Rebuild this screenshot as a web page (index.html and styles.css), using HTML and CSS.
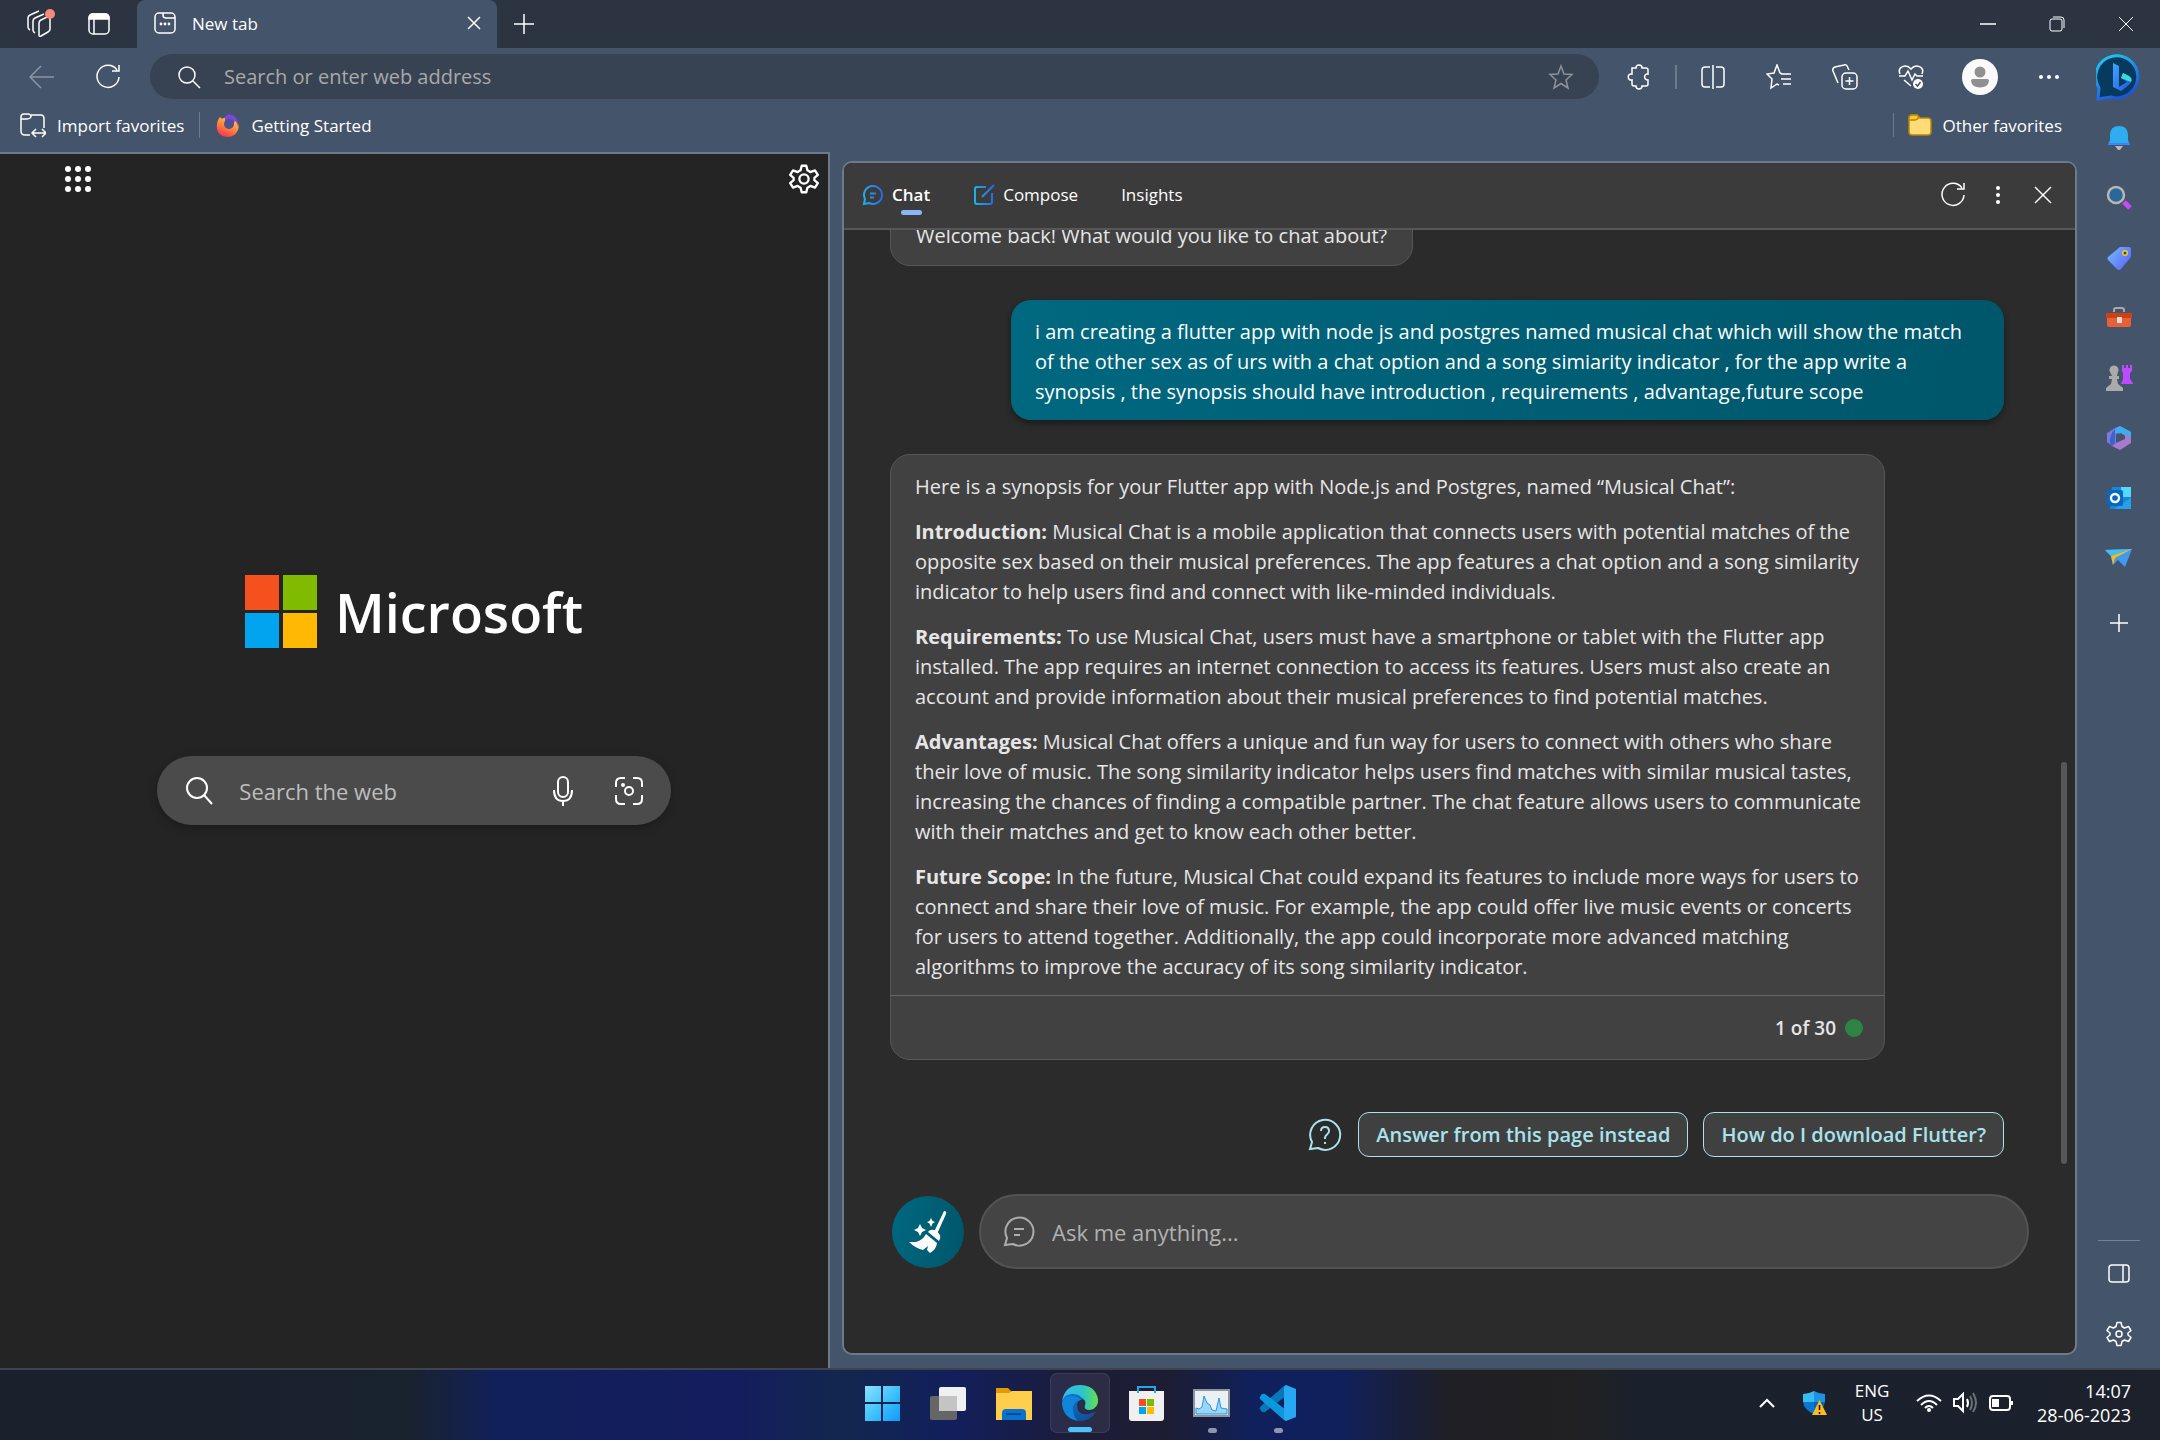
FILE: index.html
```html
<!DOCTYPE html>
<html lang="en">
<head>
<meta charset="utf-8">
<title>New tab</title>
<link rel="stylesheet" href="styles.css">
</head>
<body>
<div class="window">
  <header class="titlebar">
    <button class="title-btn workspaces" aria-label="Workspaces"><svg class="line" width="28" height="30" viewBox="0 0 28 30"><path d="M12 26V14Q12 12 14 11L20 8Q23 7 23 10V20Q23 22 21 23L14 27Q12 28 12 26Z"/><path d="M8 24Q6 23 6 21V12Q6 10 8 9L17 5"/><path d="M3 21Q1 20 1 18V9Q1 7 3 6L12 2"/><circle cx="23" cy="5" r="5" fill="#f28b7d" stroke="none"/></svg></button>
    <button class="title-btn" aria-label="Tab actions"><svg class="line" width="24" height="24" viewBox="0 0 24 24"><rect x="2" y="2" width="20" height="20" rx="4"/><path d="M2 7V6Q2 2 6 2H18Q22 2 22 6V7Z" fill="#fff"/><path d="M7 7V22"/></svg></button>
    <div class="tab">
      <svg class="line" width="24" height="24" viewBox="0 0 24 24"><rect x="2" y="2" width="20" height="20" rx="4"/><path d="M10 2V4Q10 7 13 7H22"/><g fill="#fff" stroke="none"><circle cx="8" cy="13" r="1.4"/><circle cx="12" cy="13" r="1.4"/><circle cx="16" cy="13" r="1.4"/></g></svg>
      <span class="tab-name">New tab</span>
      <button class="tab-close" aria-label="Close tab"><svg class="line" width="14" height="14" viewBox="0 0 14 14"><path d="M1 1L13 13M13 1L1 13"/></svg></button>
    </div>
    <button class="title-btn" aria-label="New tab"><svg class="line" width="22" height="22" viewBox="0 0 22 22"><path d="M11 1V21M1 11H21"/></svg></button>
    <div class="window-controls">
      <button aria-label="Minimize"><svg class="line" width="16" height="16" viewBox="0 0 16 16"><path d="M0 8H16"/></svg></button>
      <button aria-label="Restore"><svg class="line thin" width="16" height="16" viewBox="0 0 16 16"><rect x="1" y="3" width="12" height="12" rx="2"/><path d="M4 1H12Q15 1 15 4V12"/></svg></button>
      <button aria-label="Close"><svg class="line thin" width="16" height="16" viewBox="0 0 16 16"><path d="M1 1L15 15M15 1L1 15"/></svg></button>
    </div>
  </header>

  <div class="frame">
    <div class="main">
      <div class="toolbar">
        <button class="tool" aria-label="Back"><svg class="line dim" width="26" height="24" viewBox="0 0 26 24"><path d="M25 12H1M12 1L1 12L12 23"/></svg></button>
        <button class="tool" aria-label="Refresh"><svg class="line" width="26" height="26" viewBox="0 0 26 26"><path d="M22 6A11 11 0 1 0 24 13M24 1V7H17"/></svg></button>
        <label class="address">
          <svg class="line" width="24" height="24" viewBox="0 0 24 24"><circle cx="10" cy="10" r="8"/><path d="M16 16L23 23"/></svg>
          <input type="text" placeholder="Search or enter web address" aria-label="Address">
          <svg class="line gray" width="26" height="26" viewBox="0 0 26 26"><path d="M13 2L16 10L24 10.500L18 16L20 24L13 19.500L6 24L8 16L2 10.500L10 10Z"/></svg>
        </label>
        <div class="tools">
          <button class="tool" aria-label="Extensions"><svg class="line" width="26" height="26" viewBox="0 0 26 26"><path d="M6 4H10C10 0 16 0 16 4H20Q22 4 22 6V10C18 9 17 16 22 16V20Q22 22 20 22H16C16 26 10 26 10 22H8Q6 22 6 20V16C1 17 1 9 6 10Z"/></svg></button>
          <span class="tool-sep"></span>
          <button class="tool" aria-label="Split screen"><svg class="line" width="26" height="26" viewBox="0 0 26 26"><path d="M10 3H5Q2 3 2 6V20Q2 23 5 23H10M16 3H21Q24 3 24 6V20Q24 23 21 23H16M13 1V25"/></svg></button>
          <button class="tool" aria-label="Favorites"><svg class="line" width="26" height="26" viewBox="0 0 26 26"><path d="M16 10L14 9L11 1L8 9L1 10L6 15L5 24L11 20L13 21M15 10H25M15 15H25M17 20H25"/></svg></button>
          <button class="tool" aria-label="Collections"><svg class="line" width="26" height="26" viewBox="0 0 26 26"><rect x="10" y="9" width="15" height="16" rx="4"/><path d="M17.500 13V21M13.500 17H21.500M6 19L1 7Q0 4 3 3L12 1Q15 0 16 4L17 6"/></svg></button>
          <button class="tool" aria-label="Browser essentials"><svg class="line" width="26" height="26" viewBox="0 0 26 26"><path d="M2 10C-1 3 8-1 13 5C18-1 27 3 24 10M1 12H7L10 7L14 16L17 10L19 12H25M6 16L13 22"/><circle cx="20" cy="20" r="5" fill="#fff" stroke="none"/><path d="M17.500 20L19.500 22L22.500 18" stroke="#44546a" style="stroke:#44546a"/></svg></button>
          <button class="tool profile" aria-label="Profile"><svg width="36" height="36" viewBox="0 0 36 36"><circle cx="18" cy="18" r="18" fill="#fafafa"/><circle cx="18" cy="13" r="5.500" fill="#909090"/><path d="M9 22Q9 20 11 20H25Q27 20 27 22Q26 28.500 18 28.500Q10 28.500 9 22Z" fill="#909090"/></svg></button>
          <button class="tool" aria-label="More"><svg width="22" height="6" viewBox="0 0 22 6" fill="#fff"><circle cx="3" cy="3" r="2"/><circle cx="11" cy="3" r="2"/><circle cx="19" cy="3" r="2"/></svg></button>
        </div>
      </div>

      <nav class="favorites">
        <a class="fav" href="#import"><svg class="line" width="26" height="26" viewBox="0 0 26 26"><path d="M10 23H5Q1 23 1 19V5Q1 2 4 2H8Q11 2 11 5Q10 7 7 7H1M11 3H21Q24 3 24 7V16M13 21H25M16 17L12 21L16 25M22 17L26 21L22 25"/></svg>Import favorites</a>
        <a class="fav fav-split" href="#start"><svg width="24" height="26" viewBox="0 0 24 26"><defs><linearGradient id="fx" x1=".8" y1="0" x2=".3" y2="1"><stop offset="0" stop-color="#ffd84a"/><stop offset=".5" stop-color="#ff8a3c"/><stop offset="1" stop-color="#f8314f"/></linearGradient></defs><path d="M4 5L6 7Q8 5 12 6L20 8Q24 13 22 18Q19 25 12 25Q3 25 1 17Q0 10 4 5Z" fill="url(#fx)"/><path d="M9 5Q12 0 18 4Q23 8 22 15Q21 10 19 9L14 17Q8 16 9 5Z" fill="#7b46dd"/><circle cx="13" cy="12" r="5" fill="#52518b"/></svg>Getting Started</a>
        <a class="fav fav-split fav-other" href="#other"><svg width="24" height="24" viewBox="0 0 24 24" stroke="#b58509" stroke-width="1.500"><path d="M1 5Q1 2 4 2H9L12 5H20Q23 5 23 8V19Q23 22 20 22H4Q1 22 1 19Z" fill="#ffdc78"/><path d="M1 5Q1 2 4 2H9L11 4Q9 7 7 7H1Z" fill="#fcc935"/></svg>Other favorites</a>
      </nav>

      <div class="panes">
        <main class="page">
          <div class="page-top">
            <button aria-label="App launcher"><svg width="28" height="28" viewBox="0 0 28 28" fill="#fff"><circle cx="4" cy="4" r="3"/><circle cx="14" cy="4" r="3"/><circle cx="24" cy="4" r="3"/><circle cx="4" cy="14" r="3"/><circle cx="14" cy="14" r="3"/><circle cx="24" cy="14" r="3"/><circle cx="4" cy="24" r="3"/><circle cx="14" cy="24" r="3"/><circle cx="24" cy="24" r="3"/></svg></button>
            <button aria-label="Page settings"><svg class="line bold" width="30" height="30" viewBox="0 0 26 26"><path d="M11 1.500H15L16 5.500L18.500 7L22.500 5.500L25 9.500L22 12V14L25 16.500L22.500 20.500L18.500 19L16 20.500L15 24.500H11L10 20.500L7.500 19L3.500 20.500L1 16.500L4 14V12L1 9.500L3.500 5.500L7.500 7L10 5.500Z" stroke-linejoin="round"/><circle cx="13" cy="13" r="4"/></svg></button>
          </div>
          <div class="hero">
            <div class="ms-logo"><svg width="72" height="73" viewBox="0 0 72 73"><path fill="#f4511e" d="M0 0H34V35H0Z"/><path fill="#80ba01" d="M38 0H72V35H38Z"/><path fill="#02a4ef" d="M0 38H34V73H0Z"/><path fill="#ffb902" d="M38 38H72V73H38Z"/></svg><span>Microsoft</span></div>
            <form class="web-search">
              <svg class="line bold" width="28" height="28" viewBox="0 0 28 28"><circle cx="12" cy="11" r="10"/><path d="M19 18L27 27"/></svg>
              <input type="text" placeholder="Search the web" aria-label="Search the web">
              <button type="button" aria-label="Voice search"><svg class="line bold" width="22" height="32" viewBox="0 0 22 32"><rect x="6" y="2" width="10" height="20" rx="5"/><path d="M2 15Q2 26 11 26Q20 26 20 15M11 26V31"/></svg></button>
              <button type="button" aria-label="Visual search"><svg class="line bold" width="28" height="28" viewBox="0 0 28 28"><path d="M10 1H6Q1 1 1 6V10M18 1H22Q27 1 27 6V10M1 18V22Q1 27 6 27H10M18 27H22Q27 27 27 22V18"/><circle cx="14" cy="14" r="4"/><circle cx="8" cy="8" r="1" fill="#fff"/></svg></button>
            </form>
          </div>
        </main>

        <section class="chat">
          <header class="chat-head">
            <button class="chat-tab active"><svg class="line" width="22" height="22" viewBox="0 0 22 22"><defs><linearGradient id="bl" gradientUnits="userSpaceOnUse" x1="0" y1="0" x2="22" y2="0"><stop offset="0" stop-color="#1fb5ea"/><stop offset="1" stop-color="#2a62e8"/></linearGradient></defs><g style="stroke:url(#bl);stroke-width:2"><path d="M2 20L3 15A9 9 0 1 1 7 19Z"/><path d="M8 9.500H14M8 13.500H12"/></g></svg><span>Chat</span></button>
            <button class="chat-tab"><svg class="line" width="22" height="22" viewBox="0 0 22 22"><g style="stroke:url(#bl);stroke-width:2"><path d="M13 3H4Q2 3 2 5V18Q2 20 4 20H17Q19 20 19 18V9M9 13L21 1"/></g></svg><span>Compose</span></button>
            <button class="chat-tab"><span>Insights</span></button>
            <div class="chat-actions">
              <button aria-label="Reload"><svg class="line" width="26" height="26" viewBox="0 0 26 26"><path d="M22 6A11 11 0 1 0 24 13M24 1V7H17"/></svg></button>
              <button aria-label="More options"><svg width="6" height="18" viewBox="0 0 6 18" fill="#fff"><circle cx="3" cy="2" r="2"/><circle cx="3" cy="9" r="2"/><circle cx="3" cy="16" r="2"/></svg></button>
              <button aria-label="Close chat"><svg class="line" width="18" height="18" viewBox="0 0 18 18"><path d="M1 1L17 17M17 1L1 17"/></svg></button>
            </div>
          </header>
          <div class="messages">
            <div class="bubble bot greeting">Welcome back! What would you like to chat about?</div>
            <div class="bubble user">i am creating a flutter app with node js and postgres named musical chat which will show the match<br>of the other sex as of urs with a chat option and a song simiarity indicator , for the app write a<br>synopsis , the synopsis should have introduction , requirements , advantage,future scope</div>
            <article class="bubble bot answer">
              <div class="answer-text">
                <p>Here is a synopsis for your Flutter app with Node.js and Postgres, named “Musical Chat”:</p>
                <p><strong>Introduction:</strong> Musical Chat is a mobile application that connects users with potential matches of the<br>opposite sex based on their musical preferences. The app features a chat option and a song similarity<br>indicator to help users find and connect with like-minded individuals.</p>
                <p><strong>Requirements:</strong> To use Musical Chat, users must have a smartphone or tablet with the Flutter app<br>installed. The app requires an internet connection to access its features. Users must also create an<br>account and provide information about their musical preferences to find potential matches.</p>
                <p><strong>Advantages:</strong> Musical Chat offers a unique and fun way for users to connect with others who share<br>their love of music. The song similarity indicator helps users find matches with similar musical tastes,<br>increasing the chances of finding a compatible partner. The chat feature allows users to communicate<br>with their matches and get to know each other better.</p>
                <p><strong>Future Scope:</strong> In the future, Musical Chat could expand its features to include more ways for users to<br>connect and share their love of music. For example, the app could offer live music events or concerts<br>for users to attend together. Additionally, the app could incorporate more advanced matching<br>algorithms to improve the accuracy of its song similarity indicator.</p>
              </div>
              <footer class="answer-foot">1 of 30<span class="dot"></span></footer>
            </article>
            <div class="suggestions">
              <svg class="line aqua" width="36" height="36" viewBox="0 0 36 36"><path d="M3 32L5 25A15 15 0 1 1 11 31Z"/><path d="M14 14Q14 10 18 10Q22 10 22 14Q22 16 20 17.500Q18 19 18 21V22M18 25V27"/></svg>
              <button>Answer from this page instead</button>
              <button>How do I download Flutter?</button>
            </div>
            <span class="thumb"></span>
          </div>
          <form class="composer">
            <button type="button" class="broom" aria-label="New topic"><svg width="40" height="44" viewBox="0 0 40 44" fill="#fff"><path d="M36 1Q39 1 38 4L29 24L26 22Z"/><path d="M23 20Q28 19 32 25Q33 28 31 31L20 22Q21 20 23 20Z"/><path d="M18 24L29 33Q28 40 22 43L19 40L20 36L15 40Q7 38 1 32L8 32Q15 30 18 24Z"/><path d="M12 14L14 18L18 20L14 22L12 26L10 22L6 20L10 18Z"/><path d="M23 8L24.500 11L27 12L24.500 13.500L23 17L21.500 13.500L19 12L21.500 11Z"/></svg></button>
            <label class="ask"><svg class="line gray2" width="32" height="32" viewBox="0 0 32 32"><path d="M2 29L4 22A14 14 0 1 1 10 28Z"/><path d="M11 13H21M11 19H17"/></svg><input type="text" placeholder="Ask me anything..." aria-label="Ask me anything"></label>
          </form>
        </section>
      </div>
    </div>

    <aside class="sidebar">
      <button aria-label="Bing chat"><svg width="46" height="48" viewBox="-1 0 46 48"><defs><linearGradient id="bg1" x1="0" y1="0" x2=".5" y2="1"><stop offset="0" stop-color="#1ed3f4"/><stop offset="1" stop-color="#1c55e0"/></linearGradient><linearGradient id="bg2" x1="0" y1="0" x2="1" y2="1"><stop offset="0" stop-color="#3ba8fb"/><stop offset="1" stop-color="#2355e8"/></linearGradient></defs><path d="M1 45L2 34A21 21 0 1 1 14 43Q7 44 1 45Z" fill="#073a5c" stroke="url(#bg1)" stroke-width="3"/><path d="M16 9L22 12V33L30 28L24 24L26 19L32 22Q36 26 32 31L24 37L16 33Z" fill="url(#bg2)"/><path d="M26 19L32 22Q36 25 34 28L24 24Z" fill="#36dfd3"/></svg></button>
      <button aria-label="Notifications"><svg width="24" height="26" viewBox="0 0 24 26"><path d="M12 1Q3 1 3 10V15L1 20H23L21 15V10Q21 1 12 1Z" fill="#2eaef0"/><path d="M2 18L1 20H23L22 18Z" fill="#3c83ff"/><path d="M8 21H16L13 25H11Z" fill="#b8b8b8"/></svg></button>
      <button aria-label="Search"><svg width="26" height="26" viewBox="0 0 26 26"><path d="M18 17L24 23" stroke="#c84af7" stroke-width="5"/><circle cx="10" cy="10" r="8" fill="#28699a" stroke="#b9b5b2" stroke-width="2.500"/></svg></button>
      <button aria-label="Shopping"><svg width="26" height="26" viewBox="0 0 26 26"><defs><linearGradient id="tg" x1="0" y1=".3" x2="1" y2="1"><stop offset="0" stop-color="#72b1ff"/><stop offset="1" stop-color="#5a5cff"/></linearGradient></defs><path d="M14 2H23Q25 2 25 4V12L15 24Q13 26 11 24L2 15Q1 13 2 12Z" fill="url(#tg)"/><circle cx="19" cy="8" r="2.300" fill="#374b83" stroke="#f7cf16" stroke-width="1.500"/></svg></button>
      <button aria-label="Tools"><svg width="28" height="24" viewBox="0 0 28 24"><path d="M9 6V4Q9 2 11 2H17Q19 2 19 4V6" fill="none" stroke="#aaa" stroke-width="2"/><path d="M2 10H26V19Q26 21 24 21H4Q2 21 2 19Z" fill="#e86038"/><path d="M1 7H27V12H1Z" fill="#d14010"/><rect x="12" y="11" width="5" height="6" fill="#ddd"/></svg></button>
      <button aria-label="Games"><svg width="28" height="28" viewBox="0 0 28 28"><path d="M17 1H19V4H21V1H23V4H25V1H27V7L25 9V15L28 19V20H16L18 15V9L17 7Z" fill="#bd4bff"/><path d="M5 8A4.500 4.500 0 1 1 13 8L12 12H14V15H12L13 20L18 24V27H1V24L6 20L7 15H4V12H7Z" fill="#aaa"/></svg></button>
      <button aria-label="Microsoft 365"><svg width="26" height="26" viewBox="0 0 26 26"><path d="M9 3L14 1L25 7V15L16 8L10 9V18L6 21L1 17V8Z" fill="#7b78df"/><path d="M14 1L25 7V15L15 8L9 8V4Z" fill="#39aef0"/><path d="M10 18L19 14V9L25 12V18L14 25L6 21Z" fill="#a77ad0"/><path d="M9 4V8V18L6 21L4 19Q3 10 9 4Z" fill="#3b65c9"/></svg></button>
      <button aria-label="Outlook"><svg width="26" height="24" viewBox="0 0 26 24"><path d="M6 1H25V23H4V12Z" fill="#1688d5"/><path d="M15 1H25V11H15Z" fill="#55d8fb"/><path d="M25 12V23H8Z" fill="#2a9fe9"/><rect x="1" y="4" width="16" height="16" rx="2" fill="#0568c1"/><circle cx="9" cy="12" r="4" fill="none" stroke="#fff" stroke-width="2.400"/></svg></button>
      <button aria-label="Drop"><svg width="28" height="20" viewBox="0 0 28 20"><path d="M0 2L27 1L20 19L13 12L8 17L6 8Z" fill="#4298ef"/><path d="M0 2L27 1L6 8Z" fill="#43bdf5"/><path d="M27 1L6 8L8 17L10 10Z" fill="#f6bd16"/></svg></button>
      <button class="add" aria-label="Customize"><svg class="line" width="18" height="18" viewBox="0 0 18 18"><path d="M9 0V18M0 9H18"/></svg></button>
      <hr>
      <button aria-label="Hide sidebar"><svg class="line" width="22" height="20" viewBox="0 0 22 20"><rect x="1" y="1" width="20" height="17" rx="3"/><path d="M15 1V18"/></svg></button>
      <button aria-label="Settings"><svg class="line" width="26" height="26" viewBox="0 0 26 26"><path d="M11 1.500H15L16 5.500L18.500 7L22.500 5.500L25 9.500L22 12V14L25 16.500L22.500 20.500L18.500 19L16 20.500L15 24.500H11L10 20.500L7.500 19L3.500 20.500L1 16.500L4 14V12L1 9.500L3.500 5.500L7.500 7L10 5.500Z" stroke-linejoin="round"/><circle cx="13" cy="13" r="3"/></svg></button>
    </aside>
  </div>
</div>

<footer class="taskbar">
  <nav class="apps">
    <button aria-label="Start"><svg width="36" height="36" viewBox="0 0 36 36"><defs><linearGradient id="win" x1="0" y1="0" x2="1" y2="1"><stop offset="0" stop-color="#8be2fb"/><stop offset=".5" stop-color="#41c3fb"/><stop offset="1" stop-color="#0f98fb"/></linearGradient></defs><path fill="url(#win)" d="M1 1H17V17H1ZM19 1H36V17H19ZM1 19H17V36H1ZM19 19H36V36H19Z"/></svg></button>
    <button aria-label="Task view"><svg width="38" height="36" viewBox="0 0 38 36"><rect x="1" y="11" width="27" height="24" rx="2" fill="#666"/><rect x="10" y="2" width="27" height="24" rx="2" fill="#f0f0f0"/><rect x="10" y="11" width="18" height="15" fill="#c4c4c4"/></svg></button>
    <button aria-label="File Explorer"><svg width="38" height="36" viewBox="0 0 38 36"><path d="M1 3H13L17 7V12H1Z" fill="#e29a05"/><path d="M1 8H14L17 6H37V35H1Z" fill="#ffcf4b"/><path d="M7 35V28Q7 24 11 24H27Q31 24 31 28V35Z" fill="#0872ce"/><path d="M11 29H26" stroke="#044b94" stroke-width="2"/></svg></button>
    <button class="current" aria-label="Microsoft Edge"><svg width="38" height="38" viewBox="0 0 38 38"><defs><linearGradient id="e1"><stop offset="0" stop-color="#35b7f1"/><stop offset=".6" stop-color="#2cc6c5"/><stop offset="1" stop-color="#6ae04a"/></linearGradient><linearGradient id="e2" x1="0" y1="0" x2=".7" y2="1"><stop offset="0" stop-color="#0c78d3"/><stop offset="1" stop-color="#10509c"/></linearGradient></defs><path d="M1 17Q4 1 19 1Q34 1 37 15Q38 24 29 26Q22 26 24 21Q26 16 19 13Q8 9 1 17Z" fill="url(#e1)"/><path d="M1 19Q2 11 10 10Q19 9 22 16Q17 15 16 21Q16 32 28 30Q33 28 35 28Q29 37 19 37Q3 36 1 19Z" fill="url(#e2)"/><path d="M1 19Q4 11 12 12Q19 13 20 16Q11 17 12 27Q13 34 17 37Q2 34 1 19Z" fill="#0f86dc"/></svg><i></i></button>
    <button aria-label="Microsoft Store"><svg width="36" height="38" viewBox="0 0 36 38"><path d="M1 7H36V34Q36 37 33 37H4Q1 37 1 34Z" fill="#f0f0f0"/><path d="M10 9V3H27V9" fill="none" stroke="#1fa8ea" stroke-width="2"/><path d="M11 15H18V22H11Z" fill="#f25022"/><path d="M19 15H26V22H19Z" fill="#7fba00"/><path d="M11 23H18V30H11Z" fill="#00a4ef"/><path d="M19 23H26V30H19Z" fill="#ffb900"/></svg></button>
    <button aria-label="Task Manager"><svg width="38" height="30" viewBox="0 0 38 30"><rect x="1" y="2" width="35" height="26" fill="#eaf0f4" stroke="#8b969e" stroke-width="2"/><path d="M3 20L6 21L9 19L11 8L14 15L17 17L19 22L23 23L26 10L28 20L34 21V26H3Z" fill="#99d5f8" stroke="#2997dd"/></svg><i></i></button>
    <button aria-label="Visual Studio Code"><svg width="38" height="38" viewBox="0 0 38 38"><path d="M27 1V12L6 28Q4 29 2 27L1 25Q0 24 2 22L25 2Z" fill="#0877b9"/><path d="M27 37V26L6 10Q4 9 2 11L1 13Q0 14 2 16L25 36Z" fill="#0c98dd"/><path d="M27 1L37 5V33L27 37L25 35V3Z" fill="#27a8f2"/></svg><i></i></button>
  </nav>
  <div class="tray">
    <button class="wide" aria-label="Hidden icons"><svg class="line bold" width="18" height="12" viewBox="0 0 18 12"><path d="M2 10L9 3L16 10"/></svg></button>
    <button class="wide" aria-label="Windows Security"><svg width="26" height="26" viewBox="0 0 26 26"><path d="M12 1Q17 4 23 4V12H12Z" fill="#1d93e2"/><path d="M12 1Q7 4 1 4V12H12Z" fill="#37bdf3"/><path d="M1 12H12V24Q2 20 1 12Z" fill="#0877d2"/><path d="M12 12H23Q22 20 12 24Z" fill="#0565b7"/><path d="M17.500 10L25 25H10Z" fill="#fdbd1c"/><path d="M17.500 15V20M17.500 22V24" stroke="#111" stroke-width="1.500"/></svg></button>
    <button class="lang">ENG<br>US</button>
    <button aria-label="Wi-Fi"><svg class="line bold" width="26" height="20" viewBox="0 0 26 20"><path d="M1 8Q13-3 25 8M5 12Q13 4 21 12M9 15Q13 11 17 15"/><circle cx="13" cy="17" r="2" fill="#fff" stroke="none"/></svg></button>
    <button aria-label="Volume"><svg class="line bold" width="26" height="22" viewBox="0 0 26 22"><path d="M2 7H6L11 2V19L6 14H2Z"/><path d="M15 7Q17 11 15 15"/><path d="M18 4Q22 11 18 18M21 1Q27 11 21 20" opacity=".35"/></svg></button>
    <button aria-label="Battery"><svg class="line bold" width="26" height="18" viewBox="0 0 26 18"><rect x="2" y="2" width="20" height="14" rx="3"/><path d="M4 5H11V13H4Z" fill="#fff" stroke="none"/><path d="M24 7V11"/></svg></button>
    <button class="clock"><time>14:07<br>28-06-2023</time></button>
  </div>
</footer>
</body>
</html>
```
FILE: styles.css
```css
* { box-sizing: border-box; }

body {
  margin: 0;
  height: 100vh;
  display: flex;
  flex-direction: column;
  background: #44546a;
  color: #fff;
  font-family: "Open Sans", "Noto Sans", sans-serif;
  font-size: 17px;
  overflow: hidden;
}

button {
  padding: 0;
  border: 0;
  background: none;
  color: inherit;
  font: inherit;
  display: flex;
  align-items: center;
  justify-content: center;
}

input {
  flex: 1;
  min-width: 0;
  padding: 0;
  border: 0;
  outline: 0;
  background: none;
  color: #fff;
  font: inherit;
}

svg { display: block; flex: none; }
a { color: inherit; text-decoration: none; }

.line { fill: none; stroke: #fff; stroke-width: 1.5; }
.line.thin { stroke-width: 1; }
.line.bold { stroke-width: 2; }
.line.dim { stroke: #8b95a3; }
.line.gray { stroke: #8f9296; }
.line.gray2 { stroke: #adadad; stroke-width: 2; }
.line.aqua { stroke: #a9e3ec; stroke-width: 2; }

.window { flex: 1; min-height: 0; display: flex; flex-direction: column; }

/* title bar */
.titlebar {
  height: 48px;
  display: flex;
  background: #2b3440;
}
.title-btn { width: 54px; }
.workspaces { width: 62px; margin-left: 10px; }
.titlebar .tab {
  width: 360px;
  margin-left: 11px;
  padding: 0 16px 2px;
  display: flex;
  align-items: center;
  gap: 15px;
  background: #44546a;
  border-radius: 8px 8px 0 0;
}
.tab-name { flex: 1; }
.window-controls { margin-left: auto; display: flex; }
.window-controls button { width: 69px; }

/* window body */
.frame { flex: 1; min-height: 0; display: flex; }
.main { flex: 1; min-width: 0; display: flex; flex-direction: column; }

.toolbar {
  height: 57px;
  padding: 0 0 0 9px;
  display: flex;
  align-items: center;
}
.tool { width: 66px; height: 45px; }
.tool.profile { width: 72px; }
.address {
  flex: 1;
  height: 45px;
  margin: 0 7px 0 9px;
  padding: 0 25px 0 27px;
  display: flex;
  align-items: center;
  gap: 23px;
  border-radius: 23px;
  background: #374353;
  font-size: 20px;
}
.address input::placeholder { color: #a9a9a9; opacity: 1; }
.tools { display: flex; align-items: center; }
.tool-sep { width: 2px; height: 24px; margin: 0 3px; background: #6c7a8c; }

.favorites {
  height: 47px;
  padding: 0 20px 7px;
  display: flex;
  align-items: center;
}
.fav { display: flex; align-items: center; gap: 11px; }
.fav-split {
  margin-left: 15px;
  padding-left: 16px;
  border-left: 1px solid #6c7a8c;
}
.fav-split.fav-other { margin-left: auto; padding-left: 14px; }

.panes {
  flex: 1;
  min-height: 0;
  padding-right: 5px;
  display: grid;
  grid-template-columns: 830fr 1235fr;
  grid-template-rows: 100%;
  gap: 12px;
}

/* new tab page */
.page {
  border-top: 2px solid #6c7a8c;
  border-right: 2px solid #6c7a8c;
  background: #242424;
}
.page-top {
  height: 50px;
  padding: 0 9px 0 64px;
  display: flex;
  justify-content: space-between;
}
.hero {
  margin-top: 371px;
  display: flex;
  flex-direction: column;
  align-items: center;
}
.ms-logo {
  height: 73px;
  display: flex;
  align-items: center;
  gap: 18px;
  font-size: 54px;
  font-weight: 600;
  line-height: 72px;
}
.web-search {
  width: 62%;
  height: 69px;
  margin-top: 108px;
  padding: 0 28px;
  display: flex;
  align-items: center;
  gap: 26px;
  border-radius: 35px;
  background: #4b4b4b;
  box-shadow: 0 3px 8px #0004;
  font-size: 22px;
}
.web-search input::placeholder { color: #bdbdbd; opacity: 1; }
.web-search button { width: 28px; margin-left: 12px; }

/* chat pane */
.chat {
  margin: 9px 0 13px;
  display: flex;
  flex-direction: column;
  border: 2px solid #6c7a8c;
  border-radius: 10px;
  background: #2b2b2b;
  overflow: hidden;
}
.chat-head {
  height: 67px;
  padding: 0 16px 2px 18px;
  flex: none;
  display: flex;
  gap: 43px;
  background: #3b3b3b;
  border-bottom: 2px solid #575757;
}
.chat-tab { gap: 8px; }
.chat-tab.active { font-weight: 600; }
.chat-tab span { position: relative; }
.chat-tab.active span::after {
  content: "";
  position: absolute;
  left: 9px;
  bottom: -9px;
  width: 21px;
  height: 5px;
  border-radius: 3px;
  background: #8ab4f8;
}
.chat-actions { margin-left: auto; display: flex; }
.chat-actions button { width: 45px; }
.chat-actions button:last-child { width: 33px; margin-left: 6px; }

.messages {
  flex: 1;
  min-height: 0;
  position: relative;
  padding: 0 71px 7px 46px;
  display: flex;
  flex-direction: column;
  justify-content: flex-end;
  gap: 34px;
  overflow: hidden;
  font-size: 20px;
  line-height: 30px;
}
.bubble { flex: none; border-radius: 20px; white-space: nowrap; }
.bot { align-self: flex-start; background: #414141; border: 1px solid #575757; color: #e6e6e6; }
.greeting { padding: 14px 25px; }
.user {
  align-self: flex-end;
  width: 993px;
  padding: 17px 24px 13px;
  background: linear-gradient(100deg, #006880, #00566a);
  box-shadow: 0 3px 6px #0006;
}
.answer { width: 995px; }
.answer-text { padding: 17px 24px 13px; }
.answer p { margin: 0 0 15px; }
.answer p:last-child { margin: 0; }
.answer-foot {
  height: 64px;
  padding-right: 21px;
  display: flex;
  align-items: center;
  justify-content: flex-end;
  gap: 9px;
  border-top: 1px solid #666;
  font-size: 19px;
  font-weight: 600;
}
.dot { width: 18px; height: 18px; border-radius: 50%; background: #2d8445; }

.suggestions {
  margin-top: 18px;
  display: flex;
  align-items: center;
  justify-content: flex-end;
  gap: 15px;
}
.suggestions button {
  height: 45px;
  padding: 0 17px;
  border: 1px solid #a9e3ec;
  border-radius: 11px;
  background: #404040;
  color: #a9e3ec;
  font-weight: 600;
}
.thumb {
  position: absolute;
  right: 8px;
  bottom: 0;
  width: 6px;
  height: 43%;
  border-radius: 3px;
  background: #575757;
}

.composer {
  padding: 30px 46px 84px 48px;
  flex: none;
  display: flex;
  align-items: center;
  gap: 15px;
}
.broom {
  width: 72px;
  height: 72px;
  border-radius: 50%;
  background: linear-gradient(100deg, #006880, #00566a);
}
.ask {
  flex: 1;
  height: 75px;
  padding: 0 22px;
  display: flex;
  align-items: center;
  gap: 17px;
  border: 2px solid #535353;
  border-radius: 38px;
  background: #444;
  font-size: 22px;
}
.ask input::placeholder { color: #b0b0b0; opacity: 1; }

/* sidebar */
.sidebar {
  width: 78px;
  padding: 0 4px 4px 0;
  display: flex;
  flex-direction: column;
  align-items: center;
}
.sidebar button { width: 60px; height: 60px; flex: none; }
.sidebar .add { margin-top: 5px; }
.sidebar hr { width: 42px; margin: auto 0 3px; border: 0; border-top: 1px solid #76828f; }

/* taskbar */
.taskbar {
  height: 72px;
  padding-bottom: 4px;
  flex: none;
  display: grid;
  grid-template-columns: 1fr auto 1fr;
  align-items: center;
  border-top: 2px solid #3d4450;
  background: linear-gradient(90deg, #1a212c 0%, #19222f 19%, #11205a 23%, #141d5e 34%, #12274e 39%, #121f5c 44%, #1c1c38 50%, #1d1d32 54%, #10205c 58%, #10205c 62%, #1f1f26 67%, #212122 73%, #1a212d 76%, #1c212c 100%);
}
.apps { grid-column: 2; display: flex; gap: 6px; }
.apps button { position: relative; width: 60px; height: 60px; border-radius: 7px; }
.apps .current { background: #ffffff12; border: 1px solid #ffffff14; }
.apps i {
  position: absolute;
  bottom: 0;
  width: 9px;
  height: 5px;
  border-radius: 3px;
  background: #8f95ae;
}
.apps .current i { width: 24px; background: #4cc2ff; }
.tray { padding-right: 29px; display: flex; justify-content: flex-end; }
.tray button { width: 36px; }
.tray .wide { width: 48px; }
.tray .lang { width: 66px; margin-right: 6px; }
.tray .lang, .tray .clock { line-height: 24px; }
.tray .clock { width: 112px; justify-content: flex-end; text-align: right; font-size: 18px; }
```
